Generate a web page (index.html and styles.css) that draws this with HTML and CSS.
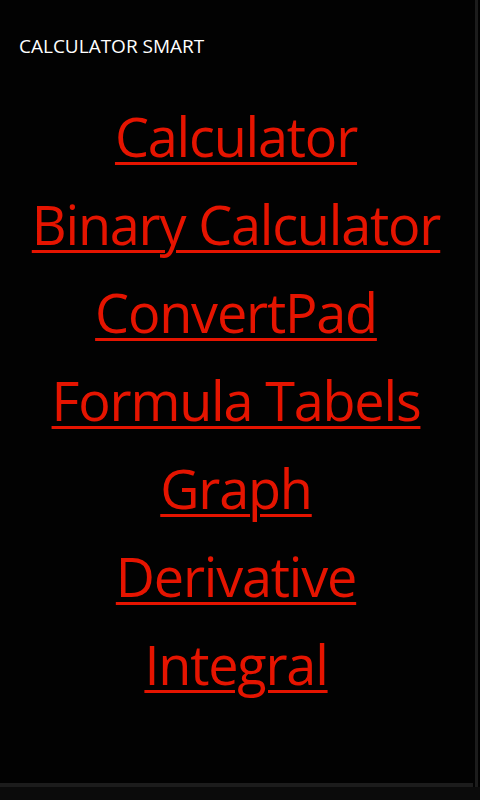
FILE: index.html
```html
<!DOCTYPE html>
<html>
<head>
<meta charset="utf-8">
<link rel="stylesheet" href="styles.css">
</head>
<body>
<div class="app">
  <header class="title">CALCULATOR SMART</header>
  <nav class="menu">
    <a class="item" href="#">Calculator</a>
    <a class="item" href="#">Binary Calculator</a>
    <a class="item" href="#">ConvertPad</a>
    <a class="item" href="#">Formula Tabels</a>
    <a class="item" href="#">Graph</a>
    <a class="item" href="#">Derivative</a>
    <a class="item" href="#">Integral</a>
  </nav>
  <div class="vscroll"></div>
  <div class="hscroll"></div>
  <div class="bottom"></div>
</div>
</body>
</html>
```
FILE: styles.css
```css
html, body {
  margin: 0;
  padding: 0;
  background: #000;
}
.app {
  width: 480px;
  height: 800px;
  background: #020202;
  font-family: "Open Sans", "Noto Sans", sans-serif;
  overflow: hidden;
}
.title {
  padding: 34px 0 0 19px;
  font-size: 19px;
  line-height: 24px;
  color: #fff;
}
.menu {
  margin-top: 34px;
  padding-right: 8px;
  display: flex;
  flex-direction: column;
  align-items: center;
}
.item {
  font-size: 54px;
  line-height: 88px;
  letter-spacing: -1.2px;
  color: #e51400;
  text-decoration: underline;
  text-decoration-thickness: 3px;
  text-underline-offset: 5px;
  white-space: nowrap;
}
.vscroll {
  position: fixed;
  top: 0;
  left: 475px;
  width: 3px;
  height: 787px;
  background: #1c1c1c;
}
.hscroll {
  position: fixed;
  top: 783px;
  left: 0;
  width: 473px;
  height: 4px;
  background: #1c1c1c;
}
.bottom {
  position: fixed;
  top: 787px;
  left: 0;
  width: 480px;
  height: 13px;
  background: #0b0b0b;
}
```
